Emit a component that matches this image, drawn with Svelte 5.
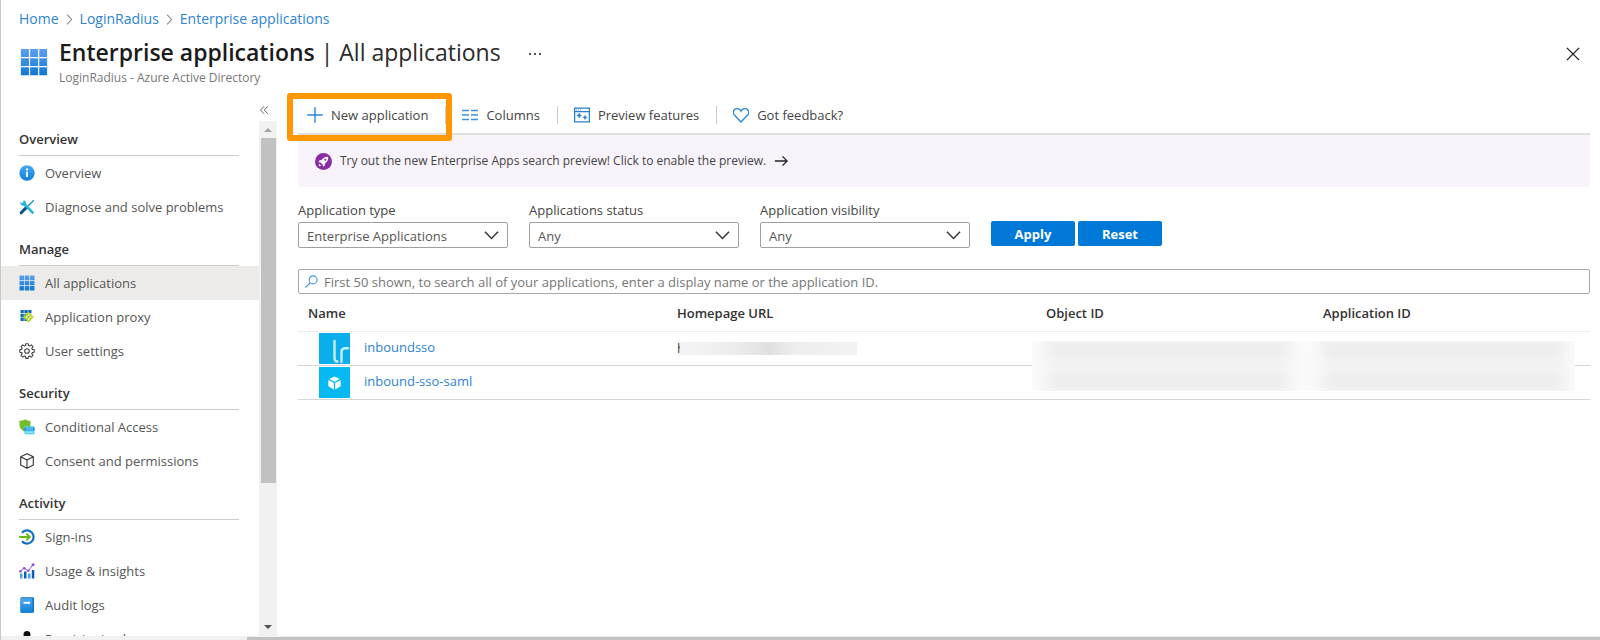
<script>
  const crumbs = ['Home', 'LoginRadius', 'Enterprise applications'];
  const sections = [
    { title: 'Overview', items: [
      { icon: 'info', label: 'Overview' },
      { icon: 'tools', label: 'Diagnose and solve problems' }
    ] },
    { title: 'Manage', items: [
      { icon: 'grid', label: 'All applications', active: true },
      { icon: 'proxy', label: 'Application proxy' },
      { icon: 'gear', label: 'User settings' }
    ] },
    { title: 'Security', items: [
      { icon: 'shield', label: 'Conditional Access' },
      { icon: 'cube', label: 'Consent and permissions' }
    ] },
    { title: 'Activity', items: [
      { icon: 'signin', label: 'Sign-ins' },
      { icon: 'chart', label: 'Usage & insights' },
      { icon: 'book', label: 'Audit logs' },
      { icon: 'person', label: 'Provisioning logs' }
    ] }
  ];
  const commands = [
    { icon: 'plus', label: 'New application', highlight: true },
    { icon: 'columns', label: 'Columns' },
    { icon: 'preview', label: 'Preview features' },
    { icon: 'heart', label: 'Got feedback?' }
  ];
  const filters = [
    { id: 'type', label: 'Application type', value: 'Enterprise Applications' },
    { id: 'status', label: 'Applications status', value: 'Any' },
    { id: 'visibility', label: 'Application visibility', value: 'Any' }
  ];
</script>

{#snippet icon(name)}
  <svg class="icon" viewBox="0 0 16 16" aria-hidden="true">
    {#if name === 'info'}
      <circle cx="8" cy="8" r="7.7" fill="url(#blue)" />
      <circle cx="8" cy="4.4" r="1.1" fill="#fff" />
      <rect x="7.1" y="6.5" width="1.8" height="5.6" rx=".6" fill="#fff" />
    {:else if name === 'tools'}
      <path d="M14.8 1.2 4.6 11.2" stroke="#1490c0" stroke-width="1.3" />
      <path d="M7.2 8.6 2.2 13.8" stroke="#0b4f94" stroke-width="3" stroke-linecap="round" />
      <path d="M4.6 4.4 13.6 13.6" stroke="#22b5dc" stroke-width="2.6" stroke-linecap="round" />
      <path d="M1.4 2.6a3.1 3.1 0 0 0 4.8 3.4A3.1 3.1 0 0 0 4.5 1v2.6L2.8 4.2z" fill="#22b5dc" />
    {:else if name === 'grid'}
      <g fill="url(#gridblue)">
        <path d="M.5.5h4.6v4.6H.5zM5.8.5h4.5v4.6H5.8zM11 .5h4.5v4.6H11zM.5 5.8h4.6v4.5H.5zM5.8 5.8h4.5v4.5H5.8zM11 5.8h4.5v4.5H11zM.5 11h4.6v4.5H.5zM5.8 11h4.5v4.5H5.8zM11 11h4.5v4.5H11z" />
      </g>
    {:else if name === 'proxy'}
      <path d="M1.5 1h3.3v3.3H1.5zM5.4 1h3.3v3.3H5.4zM9.3 1h3.2v3.3H9.3zM1.5 4.9h3.3v3.3H1.5zM5.4 4.9h3.3v3.3H5.4zM1.5 8.8h3.3V12H1.5zM5.4 8.8h3.3V12H5.4z" fill="#1268bd" />
      <path d="m9.6 2.8 5.3 5.3-5.3 5.3-5.3-5.3z" fill="#b4d629" />
      <path d="M9.6 5.2v5.8M6.8 8.1h5.6" stroke="#fff" stroke-width="1" />
      <circle cx="9.6" cy="8.1" r="1" fill="#7fae12" />
    {:else if name === 'gear'}
      <g fill="none" stroke="#444" stroke-width="1.1" stroke-linejoin="round">
        <path d="M6.8.7h2.4l.3 1.9 1.1.5 1.6-1.2 1.8 1.8-1.2 1.6.4 1.1 2 .4v2.4l-2 .4-.4 1.1 1.2 1.6-1.8 1.8-1.6-1.1-1.1.4-.3 2H6.8l-.3-2-1.1-.4-1.6 1.1L2 12.3l1.2-1.6-.5-1.1-1.9-.4V6.8l1.9-.4.5-1.1L2 3.7l1.8-1.8 1.6 1.2 1.1-.5z" />
        <circle cx="8" cy="8" r="2.3" />
      </g>
    {:else if name === 'shield'}
      <path d="M6 .3C4.500 1.500 2.500 1.700.5 1.800v4.500c0 3.500 3 5.200 5.500 6.400 2.500-1.200 5.500-2.900 5.500-6.400V1.800C9.500 1.700 7.500 1.500 6 .3z" fill="#76bc2d" />
      <path d="M5.5 7.3h10v8h-10z" fill="#50d0f5" />
      <path d="M5.5 8.800h10v2.600h-10z" fill="#1580d8" />
      <path d="M7 10h7M7 13.200h7" stroke="#d5f2fc" stroke-width=".8" />
    {:else if name === 'cube'}
      <path d="M8 .8 14.300 3.800v8.200L8 15.200 1.700 12V3.800zM1.700 3.800 8 7l6.300-3.200M8 7v8.200" fill="none" stroke="#333" stroke-width="1.1" stroke-linejoin="round" />
    {:else if name === 'signin'}
      <path d="M3 3.700a6.600 6.600 0 1 1 0 8.600" fill="none" stroke="#1070c8" stroke-width="2.2" />
      <path d="M.2 8h10.300M7.300 4.600 10.800 8l-3.500 3.400" fill="none" stroke="#6bb514" stroke-width="1.9" />
    {:else if name === 'chart'}
      <path d="M1 10.500h2.500V15.500H1zM9 10.500h2.500v5H9z" fill="#45a0e8" />
      <path d="M5 8.500h2.500v7H5zM12.800 7h2.500v8.500h-2.500z" fill="#0f5fb0" />
      <path d="M1.300 8.300 5 5.200l4.300 2.600L14 1.500" fill="none" stroke="#9a5be0" stroke-width="1" />
      <g fill="#8a4bdc"><circle cx="1.4" cy="8.3" r="1.2" /><circle cx="5.2" cy="5.2" r="1.3" /><circle cx="9.3" cy="7.8" r="1.3" /><circle cx="14" cy="1.7" r="1.5" /></g>
    {:else if name === 'book'}
      <rect x="1.5" y=".3" width="13.5" height="15.4" rx="1" fill="#1271c4" />
      <rect x="1.5" y="1.3" width="12" height="14.4" rx=".8" fill="url(#blue)" />
      <rect x="4.5" y="4.8" width="6.5" height="2" fill="#fff" />
    {:else if name === 'person'}
      <circle cx="8" cy="3.5" r="3.5" fill="#111" /><path d="M2 16a6 6 0 0 1 12 0z" fill="#111" />
    {:else if name === 'plus'}
      <path d="M8 .3v15.400M.3 8h15.400" stroke="#2886d6" stroke-width="1.4" />
    {:else if name === 'columns'}
      <path d="M0 3.500h7M9 3.500h7M0 8h7M9 8h7M0 12.500h7M9 12.500h7" stroke="#3b93dd" stroke-width="1.5" />
    {:else if name === 'preview'}
      <path d="M.6 1.200h14.800v13.600H.6zM.6 4.700h14.800" fill="none" stroke="#2580d0" stroke-width="1.3" />
      <path d="M2 3h1.200M4 3h1.200M6 3h1.200" stroke="#2580d0" stroke-width=".8" />
      <path d="m5.200 6 .8 1.700 1.700.8-1.700.8-.8 1.700-.8-1.700-1.700-.8 1.700-.8zM11 8.200l.7 1.500 1.500.7-1.500.7-.7 1.500-.7-1.500-1.500-.7 1.500-.7z" fill="#2580d0" stroke="#2580d0" stroke-width=".5" />
    {:else if name === 'heart'}
      <path d="M8 15 1.600 8.300a4 4 0 0 1-.2-5.500C3 1 6 1.200 7.300 3.200L8 4.300l.7-1.100C10 1.200 13 1 14.600 2.800a4 4 0 0 1-.2 5.500z" fill="none" stroke="#2886d6" stroke-width="1.3" />
    {:else if name === 'rocket'}
      <circle cx="8" cy="8" r="8" fill="#8a2da5" />
      <path d="M12.500 3.500c-3-.2-5 1.200-6.300 3.200L4 7l-.8 1.600 2 .3 2 2 .3 2L9.100 12l.3-2.200c2-1.300 3.300-3.300 3.100-6.300zM3.500 12.500l.6-2.300 1.700 1.700z" fill="#fff" />
      <circle cx="9.7" cy="6.3" r="1" fill="#8a2da5" />
    {:else if name === 'search'}
      <circle cx="10" cy="6" r="4.9" fill="none" stroke="#3b93dd" stroke-width="1.3" />
      <path d="M6.500 9.500.6 15.400" stroke="#3b93dd" stroke-width="1.4" />
    {:else if name === 'close'}
      <path d="m1 1 14 14M15 1 1 15" stroke="#222" stroke-width="1.6" />
    {:else if name === 'arrow'}
      <path d="M1 8h14M9.700 2.700 15 8l-5.300 5.300" fill="none" stroke="#222" stroke-width="1.5" />
    {:else if name === 'chevron'}
      <path d="m1 4 7 7.300L15 4" fill="none" stroke="#333" stroke-width="1.5" />
    {:else if name === 'sep'}
      <path d="m4.500 1 6.500 7-6.500 7" fill="none" stroke="#888" stroke-width="1.6" />
    {:else if name === 'collapse'}
      <path d="M8 2 2.500 8 8 14M14 2 8.500 8l5.500 6" fill="none" stroke="#666" stroke-width="1.6" />
    {/if}
  </svg>
{/snippet}

<svg class="defs" aria-hidden="true">
  <linearGradient id="blue" x1="0" y1="0" x2="0" y2="1"><stop offset="0" stop-color="#4ba8f0" /><stop offset="1" stop-color="#1080d8" /></linearGradient>
  <linearGradient id="gridblue" x1="0" y1="0" x2="0" y2="1"><stop offset="0" stop-color="#5ea0ef" /><stop offset="1" stop-color="#0f78d4" /></linearGradient>
</svg>

<div class="shell">
  <nav class="crumbs" aria-label="Breadcrumb">
    {#each crumbs as crumb, i}
      {#if i > 0}<span class="crumb-sep">{@render icon('sep')}</span>{/if}
      <a href="#top">{crumb}</a>
    {/each}
  </nav>

  <header class="head">
    <span class="head-icon">{@render icon('grid')}</span>
    <div class="titles">
      <h1><strong>Enterprise applications</strong> | All applications</h1>
      <p>LoginRadius - Azure Active Directory</p>
    </div>
    <button class="more" aria-label="More"><i></i><i></i><i></i></button>
    <button class="close" aria-label="Close">{@render icon('close')}</button>
  </header>

  <div class="body">
    <nav class="menu" aria-label="Sections">
      {#each sections as section}
        <h2><span>{section.title}</span></h2>
        {#each section.items as item}
          <a href="#top" class:active={item.active}>{@render icon(item.icon)}<span>{item.label}</span></a>
        {/each}
      {/each}
    </nav>

    <div class="rail">
      <button class="collapse" aria-label="Collapse menu">{@render icon('collapse')}</button>
      <div class="track">
        <span class="up"></span>
        <span class="thumb"></span>
        <span class="down"></span>
      </div>
    </div>

    <main>
      <div class="toolbar">
        {#each commands as command}
          <button class:highlight={command.highlight}>{@render icon(command.icon)}<span>{command.label}</span></button>
        {/each}
      </div>

      <a class="banner" href="#top">
        {@render icon('rocket')}
        <span>Try out the new Enterprise Apps search preview! Click to enable the preview.</span>
        <span class="arrow">{@render icon('arrow')}</span>
      </a>

      <form class="filters">
        {#each filters as filter}
          <div class="field">
            <label for={filter.id}>{filter.label}</label>
            <div class="select">
              <select id={filter.id}><option>{filter.value}</option></select>
              {@render icon('chevron')}
            </div>
          </div>
        {/each}
        <div class="actions">
          <button type="button">Apply</button>
          <button type="button">Reset</button>
        </div>
      </form>

      <label class="search">
        {@render icon('search')}
        <input type="text" aria-label="Search applications" placeholder="First 50 shown, to search all of your applications, enter a display name or the application ID." />
      </label>

      <div class="results">
        <table>
          <colgroup><col class="wide" /><col class="wide" /><col /><col /></colgroup>
          <thead>
            <tr><th>Name</th><th>Homepage URL</th><th>Object ID</th><th>Application ID</th></tr>
          </thead>
          <tbody>
            <tr>
              <td>
                <div class="app">
                  <svg class="logo" viewBox="0 0 31 31" aria-hidden="true">
                    <rect width="31" height="31" fill="#0aaeea" />
                    <path d="M15.500 8v17q0 3.500 3 3.500M22.500 29V19q0-3.800 3.700-3.800H29" fill="none" stroke="#c5f0fc" stroke-width="2.4" stroke-linecap="round" />
                  </svg>
                  <a href="#top">inboundsso</a>
                </div>
              </td>
              <td><div class="hidden-url"><span>h</span><i></i></div></td>
              <td></td>
              <td></td>
            </tr>
            <tr>
              <td>
                <div class="app">
                  <svg class="logo" viewBox="0 0 31 31" aria-hidden="true">
                    <rect width="31" height="31" fill="#05b9f2" />
                    <path d="m15.500 9.500 5.200 2.500-5.200 2.700-5.200-2.700zM9.300 13l5.500 2.800v6.700l-5.500-3.200zM21.700 13l-5.500 2.800v6.700l5.500-3.200z" fill="#fff" />
                  </svg>
                  <a href="#top">inbound-sso-saml</a>
                </div>
              </td>
              <td></td><td></td><td></td>
            </tr>
          </tbody>
        </table>
        <div class="redaction"><span class="smear"></span><span class="smear"></span></div>
      </div>
    </main>
  </div>

  <div class="hbar"><span></span></div>
</div>

<style>
  :global(body) { margin: 0; background: #fff; overflow: hidden; }
  * { box-sizing: border-box; }
  .defs { position: absolute; width: 0; height: 0; }
  .shell {
    height: 100vh; display: flex; flex-direction: column; overflow: hidden;
    border-left: 1px solid #c8c8c8; color: #444;
    font: 13px/20px "Open Sans", "Noto Sans", sans-serif;
  }
  .icon { width: 16px; height: 16px; flex: none; display: block; }
  button { font: inherit; color: inherit; background: none; border: 0; padding: 0; margin: 0; }
  a { color: #2e83d3; text-decoration: none; }
  .crumbs { display: flex; align-items: center; padding: 9px 18px 0; height: 29px; font-size: 14px; }
  .crumb-sep { padding: 0 5px; }
  .crumb-sep .icon { width: 11px; height: 11px; }

  .head { display: flex; height: 66px; padding: 6px 20px 0 19px; align-items: flex-start; }
  .head-icon { padding-top: 13px; }
  .head-icon .icon { width: 28px; height: 28px; }
  .titles { padding-left: 11px; }
  h1 { margin: 0; font-size: 23px; line-height: 34px; font-weight: 400; color: #2b2b2b; white-space: nowrap; }
  h1 strong { font-weight: 600; color: #1b1b1b; }
  p { margin: 0; font-size: 12px; line-height: 18px; color: #777; }
  .more { display: flex; gap: 3px; margin: 17px 0 0 28px; padding: 1px 0; }
  .more i { width: 2px; height: 2px; background: #555; }
  .close { margin: 12px 0 0 auto; }
  .close .icon { width: 14px; height: 14px; }

  .body { flex: 1; min-height: 0; display: flex; }
  .menu { width: 258px; flex: none; overflow: hidden; padding-top: 19px; }
  h2 {
    height: 42px; margin: 0 20px 0 18px; padding-top: 15px; border-bottom: 1px solid #ccc;
    font-size: 13px; line-height: 20px; font-weight: 600; color: #333;
  }
  .menu a { display: flex; align-items: center; gap: 10px; height: 34px; padding-left: 18px; color: #555; white-space: nowrap; }
  .menu a.active { background: #edebe9; }

  .rail { width: 18px; flex: none; display: flex; flex-direction: column; }
  .collapse { height: 26px; padding: 10px 0 6px; flex: none; }
  .collapse .icon { width: 10px; height: 10px; }
  .track { flex: 1; background: #f1f1f1; display: flex; flex-direction: column; align-items: center; }
  .thumb { width: 15px; height: 67%; background: #c1c1c1; }
  .up, .down { border: 4px solid transparent; }
  .up { border-bottom-color: #a3a3a3; border-top: 0; margin: 7px 0 6px; }
  .down { border-top-color: #505050; border-bottom: 0; margin: auto 0 7px; }

  main { flex: 1; min-width: 0; padding: 0 10px 0 21px; }
  .toolbar { display: flex; align-items: center; height: 40px; padding-top: 2px; border-bottom: 2px solid #e1dfdd; }
  .toolbar button { display: flex; align-items: center; gap: 8px; height: 18px; padding: 0 17px 0 16px; border-right: 1px solid #ccc; white-space: nowrap; }
  .toolbar button:last-child { border-right: 0; }
  .toolbar .highlight { position: relative; padding-left: 9px; }
  .highlight::after { content: ""; position: absolute; inset: -13px -7px -17px -11px; border: 6px solid #ff9800; border-radius: 3px; }
  .banner { display: flex; align-items: center; height: 52px; padding-left: 17px; background: #f8f3fb; border-radius: 0 0 3px 3px; color: #444; font-size: 12px; }
  .banner > .icon { width: 17px; height: 17px; }
  .banner span { padding-left: 8px; }
  .banner .arrow .icon { width: 14px; height: 14px; }

  .filters { display: flex; gap: 21px; padding-top: 13px; }
  .field { flex: 0 1 210px; }
  .field label { display: block; height: 22px; white-space: nowrap; }
  .select { display: grid; align-items: center; }
  .select select, .select .icon { grid-area: 1 / 1; }
  .select .icon { justify-self: end; width: 15px; height: 15px; margin-right: 9px; pointer-events: none; }
  select { appearance: none; width: 100%; height: 26px; padding: 1px 8px 0; border: 1px solid #a0a0a0; border-radius: 2px; background: #fff; color: #555; font: inherit; }
  .actions { display: flex; gap: 3px; padding-top: 21px; }
  .actions button { width: 84px; height: 25px; border-radius: 2px; background: #0078d7; color: #fff; font-weight: 700; }

  .search { display: flex; align-items: center; gap: 6px; height: 25px; margin-top: 21px; padding-left: 6px; border: 1px solid #a8a8a8; border-radius: 2px; }
  .search .icon { width: 13px; height: 13px; }
  input { flex: 1; min-width: 0; border: 0; padding: 0; outline: 0; font: inherit; color: #555; background: none; }
  input::placeholder { color: #767676; opacity: 1; }

  .results { position: relative; }
  table { width: 100%; border-collapse: collapse; table-layout: fixed; }
  .wide { width: 28.56%; }
  th { height: 37px; padding: 1px 10px 0; text-align: left; font-weight: 600; color: #333; border-bottom: 1px solid #eee; }
  td { height: 34px; padding: 0 10px; border-bottom: 1px solid #d5d5d5; }
  .app { display: flex; align-items: center; gap: 14px; padding-left: 11px; }
  .app a { padding-bottom: 3px; }
  .logo { width: 31px; height: 31px; }
  .hidden-url { display: flex; height: 14px; align-items: center; }
  .hidden-url span { width: 3px; overflow: hidden; }
  .hidden-url i { width: 177px; height: 13px; background: linear-gradient(90deg, #f4f4f4, #ededed 30%, #e0e0e0 50%, #eee 65%, #f2f2f2); }
  .redaction { position: absolute; top: 47px; right: 15px; width: 42%; height: 50px; display: flex; gap: 6%; padding: 0 10px 0 14px; background: #fafafa; overflow: hidden; }
  .smear { flex: 1; filter: blur(6px); background: linear-gradient(#e9e9e9, #eee 25%, #f3f3f3 50%, #f0f0f0 70%, #e9e9e9 88%, #f0f0f0); }

  .hbar { flex: none; height: 4px; background: #f1f1f1; padding-top: 1px; }
  .hbar span { display: block; height: 3px; margin-left: 246px; background: #c1c1c1; }
</style>
